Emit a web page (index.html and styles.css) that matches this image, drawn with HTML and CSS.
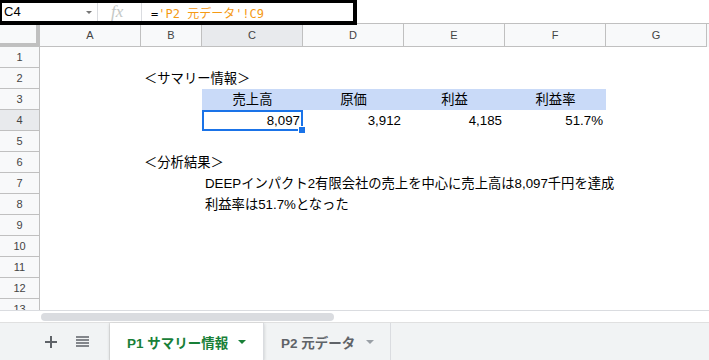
FILE: index.html
```html
<html>
<head>
  <meta charset="UTF-8">
  <meta name="viewport" content="width=device-width, initial-scale=1">
  <link rel="stylesheet" href="styles.css">
</head>
<body>
  <!-- formula bar -->
  <div class="topbar">
    <div class="fbox">
      <div class="namebox">C4<span class="caret"></span></div>
      <div class="fx">fx</div>
      <div class="formula">=<span class="ref">'P2 元データ'!C9</span></div>
    </div>
  </div>

  <!-- grid -->
  <div class="sheet">
    <div class="row head">
      <div class="corner"></div>
      <div>A</div><div>B</div><div class="on">C</div><div>D</div><div>E</div><div>F</div><div>G</div>
    </div>
    <div class="row"><div class="rh">1</div><div></div><div></div><div></div><div></div><div></div><div></div><div></div></div>
    <div class="row"><div class="rh">2</div><div></div><div class="txt">＜サマリー情報＞</div><div></div><div></div><div></div><div></div><div></div></div>
    <div class="row"><div class="rh">3</div><div></div><div></div>
      <div class="hd">売上高</div><div class="hd">原価</div><div class="hd">利益</div><div class="hd">利益率</div><div></div>
    </div>
    <div class="row"><div class="rh on">4</div><div></div><div></div>
      <div class="num sel">8,097<span class="handle"></span></div><div class="num">3,912</div><div class="num">4,185</div><div class="num">51.7%</div><div></div>
    </div>
    <div class="row"><div class="rh">5</div><div></div><div></div><div></div><div></div><div></div><div></div><div></div></div>
    <div class="row"><div class="rh">6</div><div></div><div class="txt">＜分析結果＞</div><div></div><div></div><div></div><div></div><div></div></div>
    <div class="row"><div class="rh">7</div><div></div><div></div><div class="txt">DEEPインパクト2有限会社の売上を中心に売上高は8,097千円を達成</div><div></div><div></div><div></div><div></div></div>
    <div class="row"><div class="rh">8</div><div></div><div></div><div class="txt">利益率は51.7%となった</div><div></div><div></div><div></div><div></div></div>
    <div class="row"><div class="rh">9</div><div></div><div></div><div></div><div></div><div></div><div></div><div></div></div>
    <div class="row"><div class="rh">10</div><div></div><div></div><div></div><div></div><div></div><div></div><div></div></div>
    <div class="row"><div class="rh">11</div><div></div><div></div><div></div><div></div><div></div><div></div><div></div></div>
    <div class="row"><div class="rh">12</div><div></div><div></div><div></div><div></div><div></div><div></div><div></div></div>
    <div class="row"><div class="rh">13</div><div></div><div></div><div></div><div></div><div></div><div></div><div></div></div>
  </div>

  <!-- scrollbar -->
  <div class="hscroll"><div class="thumb"></div></div>

  <!-- sheet tabs -->
  <div class="tabs">
    <div class="tools">
      <svg width="12" height="12" viewBox="0 0 12 12"><path d="M6 0v12M0 6h12" stroke="#5f6368" stroke-width="2"/></svg>
      <svg width="13" height="11" viewBox="0 0 13 11"><path d="M0 1h13M0 4h13M0 7h13M0 10h13" stroke="#5f6368" stroke-width="1.6"/></svg>
    </div>
    <div class="tab active">P1 サマリー情報<span class="tri"></span></div>
    <div class="tab">P2 元データ<span class="tri"></span></div>
  </div>
</body>
</html>
```

FILE: styles.css
```css
body {
  margin: 0;
  padding: 0;
  width: 709px;
  height: 360px;
  overflow: hidden;
  background: #fff;
  font-family: Arial, "Liberation Sans", "Noto Sans CJK JP", sans-serif;
  font-size: 13px;
  color: #000;
}

/* formula bar */
.topbar {
  height: 23px;
  position: relative;
  z-index: 2;
}
.fbox {
  box-sizing: border-box;
  width: 357px;
  height: 25px;
  border: 4px solid #000;
  border-top-width: 3px;
  border-left-width: 2px;
  background: #fff;
  display: flex;
  align-items: center;
}
.namebox {
  box-sizing: border-box;
  width: 96px;
  height: 18px;
  line-height: 18px;
  padding: 0 5px 0 2px;
  display: flex;
  align-items: center;
  justify-content: space-between;
  border-right: 1px solid #dadce0;
}
.caret {
  width: 0;
  height: 0;
  border-left: 3px solid transparent;
  border-right: 3px solid transparent;
  border-top: 3px solid #777;
}
.fx {
  width: 44px;
  box-sizing: border-box;
  padding-left: 13px;
  font-family: "Liberation Serif", serif;
  font-style: italic;
  font-size: 17px;
  color: #c4c7c5;
  border-right: 1px solid #dadce0;
  height: 18px;
  line-height: 17px;
}
.formula {
  padding-left: 9px;
  font-family: "DejaVu Sans Mono", "Noto Sans CJK JP", monospace;
  font-size: 12px;
  white-space: pre;
}
.formula .ref {
  color: #f59a14;
}

/* grid */
.sheet {
  height: 287px;
  overflow: hidden;
  border-top: 1px solid #c0c0c0;
  box-sizing: border-box;
}
.row {
  display: flex;
  height: 21px;
}
.row > div {
  flex: none;
  width: 101px;
  box-sizing: border-box;
  height: 21px;
  line-height: 21px;
  white-space: nowrap;
  font-size: 13.3px;
}
.row > div:nth-child(3) {
  width: 61px;
}
.row > div:first-child {
  width: 40px;
}
.head {
  height: 23px;
  background: #f8f9fa;
}
.row.head > div {
  height: 23px;
  line-height: 22px;
  text-align: center;
  font-size: 11px;
  color: #444;
  border-right: 1px solid #c0c0c0;
  border-bottom: 1px solid #c0c0c0;
}
.row.head > div.on {
  background: #e8eaed;
}
.row.head > .corner {
  border-right: 4px solid #c0c0c0;
  border-bottom: 4px solid #c0c0c0;
}
.row > .rh {
  background: #f8f9fa;
  text-align: center;
  font-size: 11px;
  color: #444;
  border-right: 1px solid #c0c0c0;
  border-bottom: 1px solid #c0c0c0;
}
.row > .rh.on {
  background: #e8eaed;
}
.txt {
  padding-left: 3px;
  overflow: visible;
}
.hd {
  background: #c9daf8;
  text-align: center;
}
.num {
  text-align: right;
  padding-right: 3px;
}
.row > .num.sel {
  position: relative;
  border: 2px solid #1a73e8;
  line-height: 17px;
  padding-right: 1px;
}
.handle {
  position: absolute;
  right: -5px;
  bottom: -5px;
  width: 6px;
  height: 6px;
  background: #1a73e8;
  border: 1px solid #fff;
}

/* scrollbar */
.hscroll {
  height: 12px;
  border-top: 1px solid #dadce0;
  box-sizing: border-box;
  padding: 2px 0 0 41px;
}
.thumb {
  width: 293px;
  height: 8px;
  border-radius: 4px;
  background: #dadce0;
}

/* tabs */
.tabs {
  height: 38px;
  background: #f1f3f4;
  border-top: 1px solid #e0e0e0;
  box-sizing: border-box;
  display: flex;
}
.tools {
  width: 110px;
  box-sizing: border-box;
  padding-left: 45px;
  display: flex;
  align-items: center;
  gap: 19px;
  border-right: 1px solid #e3e3e3;
}
.tab {
  display: flex;
  align-items: center;
  padding-left: 17px;
  font-size: 13.5px;
  font-weight: bold;
  white-space: nowrap;
  color: #5f6368;
  border-right: 1px solid #dadce0;
  width: 127px;
  box-sizing: border-box;
}
.tab.active {
  width: 154px;
  background: #fff;
  color: #188038;
  box-shadow: 0 1px 3px rgba(60,64,67,0.25);
}
.tri {
  margin-left: 10px;
  width: 0;
  height: 0;
  border-left: 4px solid transparent;
  border-right: 4px solid transparent;
  border-top: 4px solid currentColor;
}
.tab:not(.active) .tri {
  border-top-color: #9aa0a6;
  margin-left: 11px;
}
```
